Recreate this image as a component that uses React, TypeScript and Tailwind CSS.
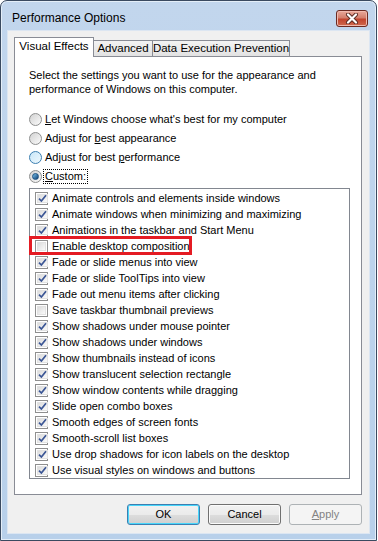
import React from "react";

const options: { label: string; checked: boolean; marked?: boolean }[] = [
  { label: "Animate controls and elements inside windows", checked: true },
  { label: "Animate windows when minimizing and maximizing", checked: true },
  { label: "Animations in the taskbar and Start Menu", checked: true },
  { label: "Enable desktop composition", checked: false, marked: true },
  { label: "Fade or slide menus into view", checked: true },
  { label: "Fade or slide ToolTips into view", checked: true },
  { label: "Fade out menu items after clicking", checked: true },
  { label: "Save taskbar thumbnail previews", checked: false },
  { label: "Show shadows under mouse pointer", checked: true },
  { label: "Show shadows under windows", checked: true },
  { label: "Show thumbnails instead of icons", checked: true },
  { label: "Show translucent selection rectangle", checked: true },
  { label: "Show window contents while dragging", checked: true },
  { label: "Slide open combo boxes", checked: true },
  { label: "Smooth edges of screen fonts", checked: true },
  { label: "Smooth-scroll list boxes", checked: true },
  { label: "Use drop shadows for icon labels on the desktop", checked: true },
  { label: "Use visual styles on windows and buttons", checked: true },
];

function CheckBox({ checked }: { checked: boolean }) {
  return (
    <span className="flex h-[13px] w-[13px] shrink-0 border border-[#8f8f8f] bg-white p-[1px]">
      <span className="flex flex-1 items-center justify-center border border-[#e2e2e2] bg-gradient-to-br from-[#dcdcdc] to-[#fafafa]">
        {checked && (
          <svg width="9" height="9" viewBox="0 0 9 9">
            <path d="M1 4.6 L3.4 7 L8 1.2" fill="none" stroke="#3b5695" strokeWidth="1.7" />
          </svg>
        )}
      </span>
    </span>
  );
}

function Radio({ state }: { state: "off" | "hover" | "on" }) {
  const ring =
    state === "hover"
      ? "border-[#3c7fb1] from-[#c9e7f8] to-[#eef8fd]"
      : "border-[#8e8f8f] from-[#d2d2d2] to-[#fbfbfb]";
  return (
    <span
      className={`flex h-[13px] w-[13px] shrink-0 items-center justify-center rounded-full border bg-gradient-to-br ${ring}`}
    >
      {state === "on" && (
        <span className="h-[7px] w-[7px] rounded-full border border-[#1c5180] bg-gradient-to-br from-[#7ac4ee] to-[#0f3f72]" />
      )}
    </span>
  );
}

function Button({ children, kind }: { children: React.ReactNode; kind: "default" | "normal" | "disabled" }) {
  const look =
    kind === "default"
      ? "border-[#3c7fb1] text-black shadow-[inset_0_0_0_1px_#48d6fb]"
      : kind === "normal"
        ? "border-[#707070] text-black shadow-[inset_0_0_0_1px_#fbfbfb]"
        : "border-[#adb2b5] text-[#838383]";
  const fill =
    kind === "disabled"
      ? "bg-[#f4f4f4]"
      : "bg-[linear-gradient(to_bottom,#f2f2f2_0%,#ebebeb_50%,#dddddd_51%,#cfcfcf_100%)]";
  return (
    <div className={`flex h-[21px] w-[73px] items-center justify-center rounded-[3px] border ${look} ${fill}`}>
      {children}
    </div>
  );
}

export default function App() {
  return (
    <div className="h-[541px] w-[378px] bg-white font-['Liberation_Sans',Arial,sans-serif] text-[11px] text-black">
      <div className="flex h-[541px] w-[377px] flex-col rounded-t-[7px] border border-[#3a4a60] bg-gradient-to-b from-[#c2d6ed] via-[#bcd3ec] to-[#b8d0ea] px-[6px] pb-[6px] shadow-[inset_0_0_0_1px_#e4eef8]">
        {/* title bar */}
        <div className="flex h-[29px] shrink-0 items-center justify-between pl-[5px] pr-[2px] pt-[5px]">
          <span className="text-[12px] leading-none text-black">Performance Options</span>
          <div className="flex h-[17px] w-[32px] items-center justify-center rounded-[3px] border border-[#6b2a22] bg-[linear-gradient(to_bottom,#e9a99b_0%,#d47f6d_45%,#c2452f_55%,#cf6a4f_100%)] shadow-[inset_0_0_0_1px_#f0b9ad]">
            <svg width="14" height="11" viewBox="0 0 14 11">
              <path d="M3 1.5 L11 9.5 M11 1.5 L3 9.5" stroke="#5a2a22" strokeWidth="4" strokeLinecap="round" />
              <path d="M3 1.5 L11 9.5 M11 1.5 L3 9.5" stroke="#ffffff" strokeWidth="2.2" strokeLinecap="round" />
            </svg>
          </div>
        </div>

        {/* client area */}
        <div className="flex flex-1 flex-col border border-[#dce6f2] bg-[#f0f0f0] px-[6px] pt-[6px] pb-[8px]">
          {/* tabs */}
          <div className="flex items-end whitespace-nowrap text-[11.5px]">
            <div className="relative z-10 -mb-px flex h-[20px] w-[80px] items-center justify-center border border-b-0 border-[#898c95] bg-white pb-[2px]">
              Visual Effects
            </div>
            <div className="-ml-px flex h-[16px] w-[60px] items-center justify-center border border-b-0 border-[#898c95] bg-gradient-to-b from-[#f3f3f3] to-[#e2e2e2]">
              Advanced
            </div>
            <div className="-ml-px flex h-[16px] w-[138px] items-center justify-center border border-b-0 border-[#898c95] bg-gradient-to-b from-[#f3f3f3] to-[#e2e2e2]">
              Data Execution Prevention
            </div>
          </div>

          {/* panel */}
          <div className="flex h-[439px] w-[348px] flex-col border border-[#898c95] bg-white pl-[14px] pt-[11px]">
            <p className="w-[300px] leading-[14px]">
              Select the settings you want to use for the appearance and performance of Windows on this computer.
            </p>

            <div className="mt-[14px] flex flex-col">
              <div className="flex h-[19px] items-center gap-[3px]">
                <Radio state="off" />
                <span>
                  <u>L</u>et Windows choose what's best for my computer
                </span>
              </div>
              <div className="flex h-[19px] items-center gap-[3px]">
                <Radio state="off" />
                <span>
                  Adjust for <u>b</u>est appearance
                </span>
              </div>
              <div className="flex h-[19px] items-center gap-[3px]">
                <Radio state="hover" />
                <span>
                  Adjust for best <u>p</u>erformance
                </span>
              </div>
              <div className="flex h-[19px] items-center gap-[1px]">
                <Radio state="on" />
                <span className="border border-dotted border-black px-[1px] leading-[13px]">
                  <u>C</u>ustom:
                </span>
              </div>
            </div>

            {/* list */}
            <div className="mt-[2px] flex h-[291px] w-[321px] flex-col border border-[#828790] bg-white pl-[5px] pt-[1px]">
              {options.map((o) => (
                <div key={o.label} className="relative flex h-[16px] shrink-0 items-center gap-[4px]">
                  <CheckBox checked={o.checked} />
                  <span className="whitespace-nowrap leading-none">{o.label}</span>
                  {o.marked && (
                    <span className="absolute -left-[6px] -top-[2px] h-[19px] w-[163px] border-[3px] border-[#e41b23]" />
                  )}
                </div>
              ))}
            </div>
          </div>

          {/* buttons */}
          <div className="mt-[9px] flex justify-end gap-[8px] pr-[1px]">
            <Button kind="default">OK</Button>
            <Button kind="normal">Cancel</Button>
            <Button kind="disabled">
              <span>
                <u>A</u>pply
              </span>
            </Button>
          </div>
        </div>
      </div>
    </div>
  );
}
